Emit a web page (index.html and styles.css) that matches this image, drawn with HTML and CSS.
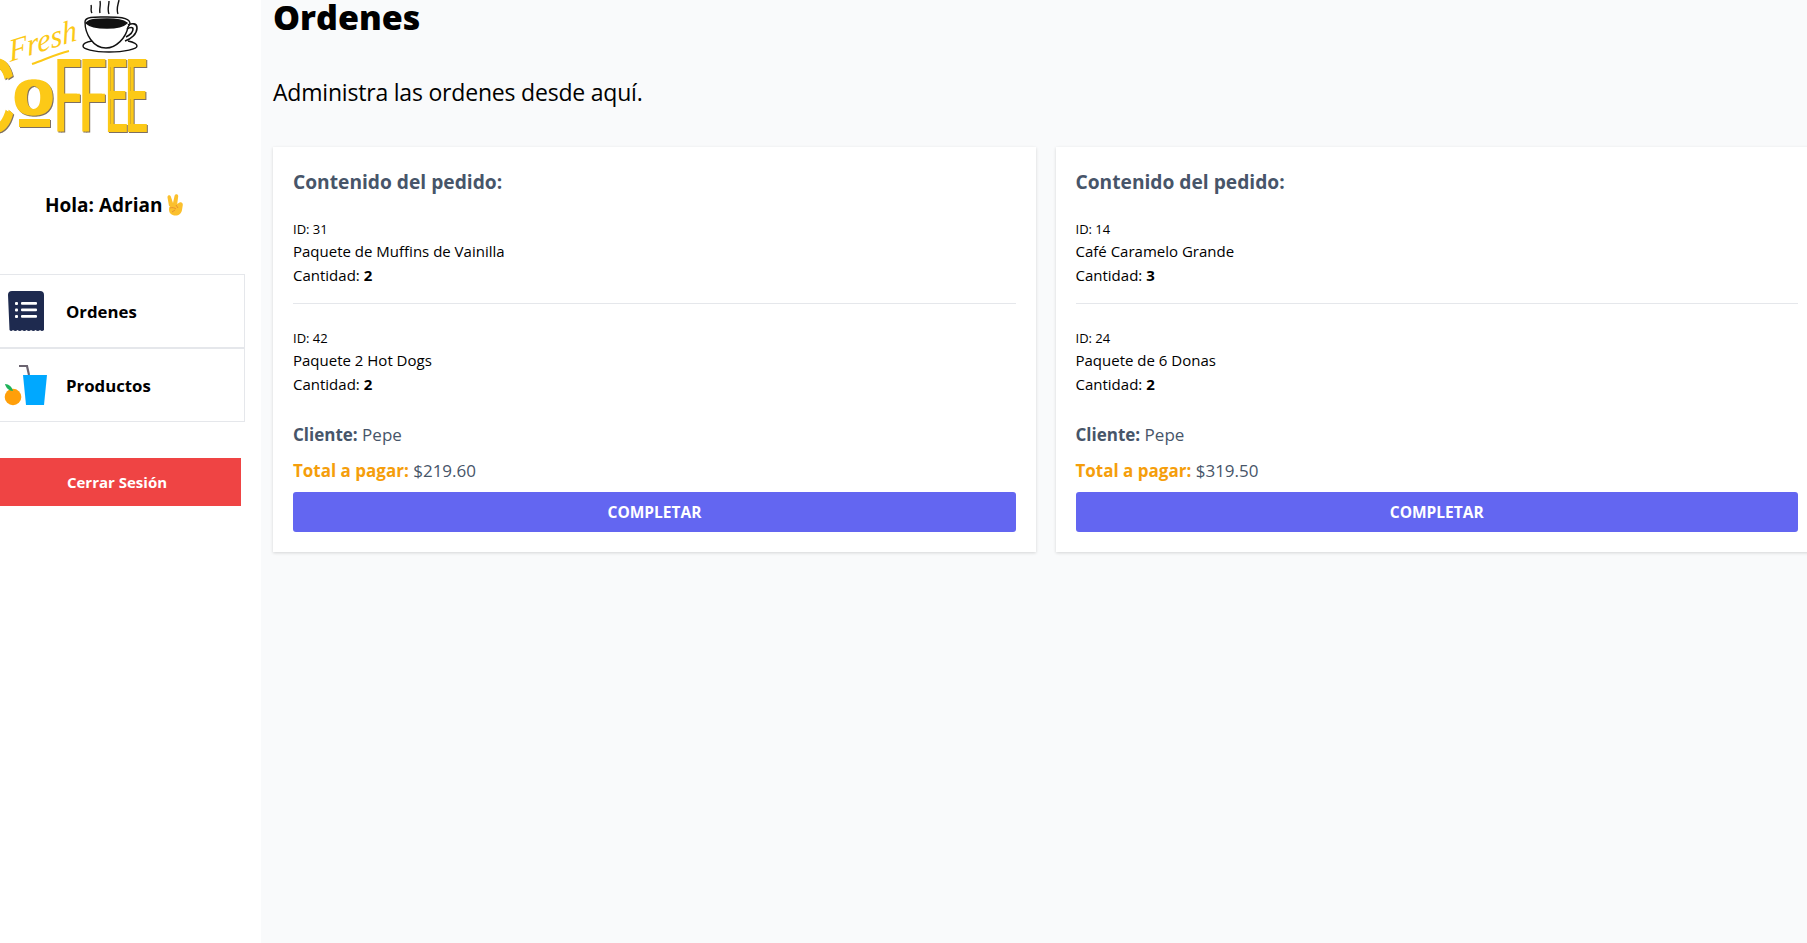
FILE: index.html
```html
<!DOCTYPE html>
<html lang="es">
<head>
    <meta charset="UTF-8">
    <meta name="viewport" content="width=device-width, initial-scale=1.0">
    <title>Ordenes</title>
    <link rel="stylesheet" href="styles.css">
</head>
<body>
    <aside class="sidebar">
        <svg class="logo" width="160" height="140" viewBox="0 0 160 140">
            <g class="logo-cup" fill="none" stroke="#111" stroke-width="1.4">
                <path d="M92 13c-2-3 0-5-1-8M100 13c-1-4 1-7 0-12M109 14c-2-5 0-8 0-13M118 14c-2-5 0-9 1-14"/>
                <path d="M85 22c0-6 12-5 22-5s22 0 23 6c0 2-1 3-2 4-2 11-12 21-22 21-13 0-21-14-21-26z" fill="#fff"/>
                <path d="M86 23c4-4 12-4 21-4s16 1 20 4c-4 4-12 5-20 5s-17-1-21-5z" fill="#111"/>
                <path d="M128 25c4-2 9-2 9 3 0 6-6 11-12 13M127 29c3-2 6-2 6 0 0 3-3 6-7 8" stroke-width="1.6"/>
                <path d="M92 41c-6 1-9 3-9 5 0 3 10 6 26 6s28-3 28-6c0-2-4-4-9-5"/>
            </g>
            <text class="logo-fresh" transform="translate(10 62) rotate(-18) skewX(-12)">Fresh</text>
            <path d="M32 64c12-4 24-10 37-13" fill="none" stroke="#fcc917" stroke-width="2"/>
            <g class="logo-word">
                <text transform="translate(-30 132) scale(.56 1)">C</text>
                <text class="logo-o" x="12" y="115">o</text>
                <text transform="translate(54 132) scale(.39 1)">F</text>
                <text transform="translate(79 132) scale(.39 1)">F</text>
                <text transform="translate(105.500 132) scale(.28 1)">E</text>
                <text transform="translate(125.500 132) scale(.28 1)">E</text>
                <rect x="19" y="119" width="28" height="8"/>
            </g>
        </svg>

        <p class="greeting">
            Hola: Adrian
            <svg class="wave" width="18" height="22" viewBox="0 0 18 22">
                <path d="M3 12 1.500 3.500c-.3-2.500 3-3 3.500-.5l2 6 1.500-7c.5-2.500 4-2 3.700.5l-1 7.500 2.300-1.500c2-1 3.500.5 3.300 2.500l-.8 5c-.6 3.500-3 5.500-6.500 5.500-4 0-6.500-2.500-6.500-6 0-1.500.2-2.500 1-3.500z" fill="#fbc02d"/>
                <path d="M4 14c2-1 5 0 6 1M6 18l3-2M10 11l2 3" fill="none" stroke="#e8912d" stroke-width="1"/>
            </svg>
        </p>

        <nav class="nav">
            <a class="nav-item" href="#">
                <svg width="38" height="40" viewBox="-1 0 38 40">
                    <path d="M0 4a4 4 0 0 1 4-4h28a4 4 0 0 1 4 4v35q-2 2-4 0-2 2-4.500 0-2 2-4.500 0-2 2-4.500 0-2 2-4.500 0-2 2-4.500 0-2 2-4.500 0-2 2-3.500 0z" fill="#1e2a4f"/>
                    <g fill="#fff">
                        <rect x="7" y="11" width="3" height="3" rx="1"/>
                        <rect x="7" y="17.500" width="3" height="3" rx="1"/>
                        <rect x="7" y="24" width="3" height="3" rx="1"/>
                        <rect x="13" y="11" width="16" height="2.700" rx="1"/>
                        <rect x="13" y="17.500" width="16" height="2.700" rx="1"/>
                        <rect x="13" y="24" width="16" height="2.700" rx="1"/>
                    </g>
                </svg>
                <span>Ordenes</span>
            </a>
            <a class="nav-item" href="#">
                <svg width="44" height="42" viewBox="0 0 44 42">
                    <path d="M15 2h8l2 9" fill="none" stroke="#6b6470" stroke-width="2.200"/>
                    <path d="M19 11h24l-3 30H22z" fill="#00a8ff"/>
                    <circle cx="9" cy="33" r="8.300" fill="#ff9f0a"/>
                    <path d="M1 20c4 0 7 3 8 7-4 0-7-3-8-7z" fill="#1fb25a"/>
                </svg>
                <span>Productos</span>
            </a>
        </nav>

        <button class="logout" type="button">Cerrar Sesión</button>
    </aside>

    <main class="content">
        <h1>Ordenes</h1>
        <p class="subtitle">Administra las ordenes desde aquí.</p>

        <div class="orders">
            <section class="card">
                <h2>Contenido del pedido:</h2>
                <div class="item">
                    <p class="item-id">ID: 31</p>
                    <p>Paquete de Muffins de Vainilla</p>
                    <p>Cantidad: <b>2</b></p>
                </div>
                <div class="item">
                    <p class="item-id">ID: 42</p>
                    <p>Paquete 2 Hot Dogs</p>
                    <p>Cantidad: <b>2</b></p>
                </div>
                <p class="client"><b>Cliente:</b> Pepe</p>
                <p class="total"><b>Total a pagar:</b> $219.60</p>
                <button class="complete" type="button">COMPLETAR</button>
            </section>

            <section class="card">
                <h2>Contenido del pedido:</h2>
                <div class="item">
                    <p class="item-id">ID: 14</p>
                    <p>Café Caramelo Grande</p>
                    <p>Cantidad: <b>3</b></p>
                </div>
                <div class="item">
                    <p class="item-id">ID: 24</p>
                    <p>Paquete de 6 Donas</p>
                    <p>Cantidad: <b>2</b></p>
                </div>
                <p class="client"><b>Cliente:</b> Pepe</p>
                <p class="total"><b>Total a pagar:</b> $319.50</p>
                <button class="complete" type="button">COMPLETAR</button>
            </section>
        </div>
    </main>
</body>
</html>
```

FILE: styles.css
```css
:root {
    --slate: #475569;
    --amber: #f59e0b;
    --indigo: #6366f1;
    --line: #e5e7eb;
}

html, body {
    height: 100%;
}

body {
    margin: 0;
    display: flex;
    overflow: hidden;
    font-family: 'Open Sans', 'Noto Sans', sans-serif;
    background-color: #f9fafb;
    color: #000;
}

p, h1, h2 {
    margin: 0;
}

.sidebar {
    flex: none;
    width: 261px;
    height: 100%;
    background-color: #fff;
}

.logo {
    display: block;
}

.logo-word {
    font-family: 'Liberation Sans', sans-serif;
    font-size: 105px;
    fill: #fcc917;
    filter: drop-shadow(3px 0 0 #fcc917) drop-shadow(1px 1px 0 #7d6f62);
}

.logo-o {
    font-family: 'Liberation Sans', sans-serif;
    font-size: 66px;
    font-weight: 700;
}

.logo-fresh {
    font-family: 'Liberation Serif', serif;
    font-style: italic;
    font-size: 31px;
    fill: #fcc917;
}

.greeting {
    display: flex;
    align-items: center;
    gap: 4px;
    margin-top: 51px;
    padding-left: 45px;
    font-size: 19px;
    font-weight: 700;
    line-height: 28px;
}

.nav {
    width: 245px;
    margin-top: 55px;
}

.nav-item {
    display: flex;
    align-items: center;
    box-sizing: border-box;
    height: 74px;
    padding-left: 4px;
    border: 1px solid var(--line);
    border-left: none;
    color: #000;
    font-size: 16.800px;
    font-weight: 700;
    text-decoration: none;
}

.nav-item svg {
    flex: none;
    width: 44px;
    margin-right: 18px;
}

.logout {
    display: block;
    width: 241px;
    height: 48px;
    margin-top: 36px;
    padding: 0 7px 0 0;
    border: none;
    background-color: #ef4444;
    color: #fff;
    font-family: inherit;
    font-size: 15px;
    font-weight: 700;
}

.content {
    flex: none;
    padding-left: 12px;
}

h1 {
    margin-top: -3px;
    font-size: 34px;
    font-weight: 800;
    line-height: 40px;
}

.subtitle {
    margin-top: 39px;
    font-size: 23px;
    letter-spacing: -0.2px;
    line-height: 32px;
}

.orders {
    display: grid;
    grid-template-columns: 763px 762.500px;
    gap: 19.500px;
    align-items: start;
    margin-top: 39px;
}

.card {
    padding: 21px 20px 20px;
    background-color: #fff;
    box-shadow: 0 1px 3px rgba(0, 0, 0, 0.15);
}

h2 {
    color: var(--slate);
    font-size: 19.200px;
    font-weight: 700;
    line-height: 28px;
}

.item {
    padding: 23px 0 16px;
    font-size: 15px;
    line-height: 24px;
}

.item + .item {
    padding-top: 24px;
    border-top: 1px solid var(--line);
}

.item-id {
    font-size: 13px;
    line-height: 20px;
}

.client, .total {
    color: var(--slate);
    font-size: 17px;
    line-height: 28px;
}

.client {
    margin-top: 9px;
}

.total {
    margin-top: 8px;
}

.total b {
    color: var(--amber);
}

.complete {
    display: block;
    width: 100%;
    height: 40px;
    margin-top: 7px;
    border: none;
    border-radius: 3px;
    background-color: var(--indigo);
    color: #fff;
    font-family: inherit;
    font-size: 15.500px;
    font-weight: 700;
}
```
